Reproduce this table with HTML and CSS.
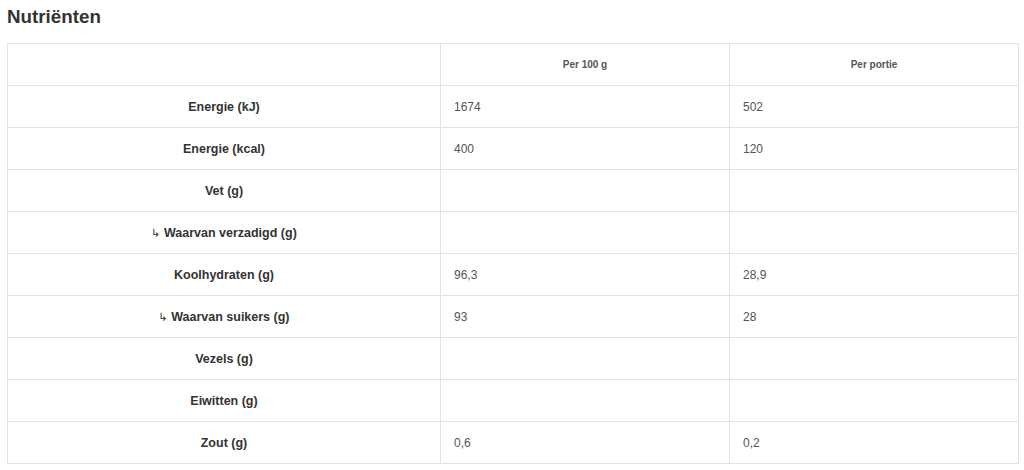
FILE: index.html
```html
<!DOCTYPE html>
<html lang="nl">
<head>
<meta charset="utf-8">
<title>Nutriënten</title>
<link rel="stylesheet" href="styles.css">
</head>
<body>
<div class="page">
  <h2 class="title">Nutriënten</h2>
  <table class="nutri">
    <colgroup>
      <col class="c-label">
      <col class="c-val">
      <col class="c-val">
    </colgroup>
    <thead>
      <tr>
        <th class="head"></th>
        <th class="head">Per 100 g</th>
        <th class="head">Per portie</th>
      </tr>
    </thead>
    <tbody>
      <tr><td class="label">Energie (kJ)</td><td class="val">1674</td><td class="val">502</td></tr>
      <tr><td class="label">Energie (kcal)</td><td class="val">400</td><td class="val">120</td></tr>
      <tr><td class="label">Vet (g)</td><td class="val"></td><td class="val"></td></tr>
      <tr><td class="label"><span class="sub">↳</span> Waarvan verzadigd (g)</td><td class="val"></td><td class="val"></td></tr>
      <tr><td class="label">Koolhydraten (g)</td><td class="val">96,3</td><td class="val">28,9</td></tr>
      <tr><td class="label"><span class="sub">↳</span> Waarvan suikers (g)</td><td class="val">93</td><td class="val">28</td></tr>
      <tr><td class="label">Vezels (g)</td><td class="val"></td><td class="val"></td></tr>
      <tr><td class="label">Eiwitten (g)</td><td class="val"></td><td class="val"></td></tr>
      <tr><td class="label">Zout (g)</td><td class="val">0,6</td><td class="val">0,2</td></tr>
    </tbody>
  </table>
</div>
</body>
</html>
```
FILE: styles.css
```css
html, body {
  margin: 0;
  padding: 0;
  background: #ffffff;
}
body {
  font-family: "Liberation Sans", Arial, sans-serif;
  color: #333333;
}
.page {
  padding: 6px 6px 0 7px;
}
.title {
  margin: 0 0 15px 0;
  font-size: 18.8px;
  line-height: 22px;
  font-weight: bold;
  color: #333333;
}
.nutri {
  width: 1011px;
  border-collapse: collapse;
  table-layout: fixed;
}
.c-label { width: 433px; }
.c-val { width: 289px; }
.nutri th,
.nutri td {
  border: 1px solid #e2e2e2;
  height: 41px;
  padding: 0;
  vertical-align: middle;
}
.head {
  text-align: center;
  font-size: 10px;
  font-weight: bold;
  color: #555555;
}
.label {
  text-align: center;
  font-size: 12.5px;
  font-weight: bold;
  color: #333333;
}
.val {
  padding-left: 13px !important;
  font-size: 12px;
  color: #555555;
}
.sub {
  font-family: "DejaVu Sans", sans-serif;
  font-size: 11px;
  font-weight: normal;
}
```
